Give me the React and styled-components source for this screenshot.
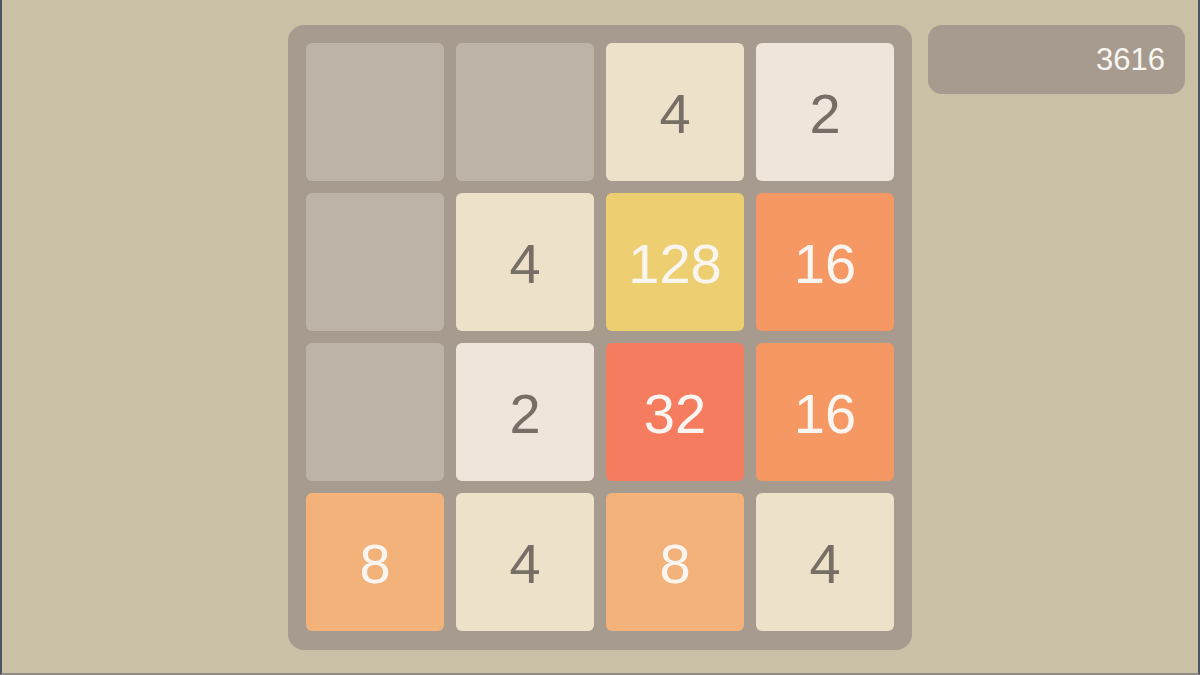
import styled, { createGlobalStyle } from 'styled-components';

const GlobalStyle = createGlobalStyle`
  html, body {
    margin: 0;
    padding: 0;
    background: #c9c0a5;
  }
  body {
    font-family: "Liberation Sans", Arial, sans-serif;
  }
`;

const tileColors = {
  0: { bg: '#bdb3a6', fg: 'transparent' },
  2: { bg: '#efe5da', fg: '#776e65' },
  4: { bg: '#ede1c9', fg: '#776e65' },
  8: { bg: '#f2b27a', fg: '#f9f6f2' },
  16: { bg: '#f59863', fg: '#f9f6f2' },
  32: { bg: '#f67c5f', fg: '#f9f6f2' },
  64: { bg: '#f65e3b', fg: '#f9f6f2' },
  128: { bg: '#edcf72', fg: '#f9f6f2' },
};

const board = [
  [0, 0, 4, 2],
  [0, 4, 128, 16],
  [0, 2, 32, 16],
  [8, 4, 8, 4],
];

const App = () => {
  return (
    <>
      <GlobalStyle />
      <SPage>
        <div />
        <SBoard>
          {board.flat().map((value, i) => (
            <STile key={i} $value={value}>
              {value > 0 ? value : ''}
            </STile>
          ))}
        </SBoard>
        <SSide>
          <SScore>3616</SScore>
        </SSide>
      </SPage>
    </>
  );
};

export default App;

const SPage = styled.div`
  width: 1200px;
  height: 675px;
  box-sizing: border-box;
  border-left: 2px solid #4a5562;
  border-right: 2px solid #4a5562;
  border-bottom: 2px solid #8e8c86;
  padding-top: 25px;
  display: grid;
  grid-template-columns: 286px 624px 1fr;
  align-items: start;
  overflow: hidden;
`;

const SBoard = styled.div`
  width: 624px;
  height: 625px;
  box-sizing: border-box;
  padding: 18px 18px 19px;
  background: #a69b8e;
  border-radius: 16px;
  display: grid;
  grid-template-columns: repeat(4, 138px);
  grid-template-rows: repeat(4, 138px);
  gap: 12px;
`;

const STile = styled.div`
  border-radius: 6px;
  background: ${({ $value }) => tileColors[$value].bg};
  color: ${({ $value }) => tileColors[$value].fg};
  display: flex;
  align-items: center;
  justify-content: center;
  font-size: 56px;
  padding-top: 3px;
`;

const SSide = styled.div`
  padding: 0 13px 0 16px;
`;

const SScore = styled.div`
  height: 69px;
  border-radius: 14px;
  background: #a69b8e;
  color: #f9f6f2;
  font-size: 31px;
  display: flex;
  align-items: center;
  justify-content: flex-end;
  padding-right: 20px;
`;
